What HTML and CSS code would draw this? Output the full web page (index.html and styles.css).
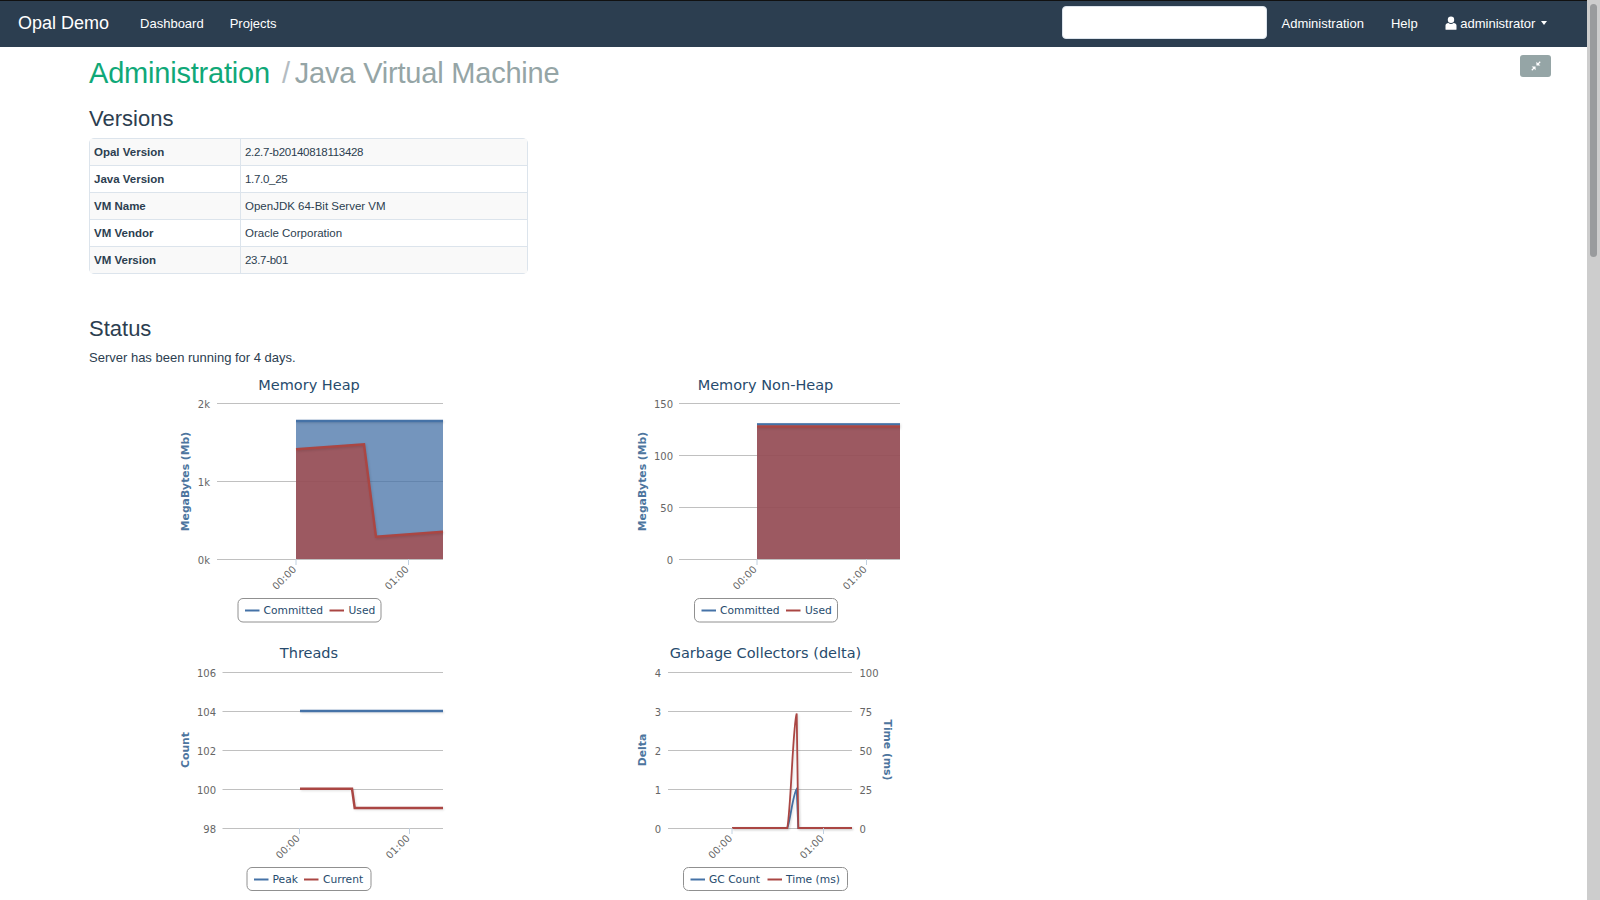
FILE: index.html
```html
<!DOCTYPE html>
<html>
<head>
<meta charset="utf-8" />
<title>Opal Demo</title>
<link rel="stylesheet" href="styles.css">
</head>
<body>

<div class="shell">
  <div class="page">

    <nav class="navbar">
      <a class="brand">Opal Demo</a>
      <a class="nav-link">Dashboard</a>
      <a class="nav-link">Projects</a>
      <div class="nav-right">
        <input class="search" type="text">
        <a class="nav-link">Administration</a>
        <a class="nav-link help">Help</a>
        <a class="nav-link user">
          <svg class="user-icon" width="12" height="14" viewBox="0 0 12 14"><circle cx="6" cy="3.8" r="3.2" fill="#fff"/><path d="M0.5 13.2V9.6C0.5 8 1.8 7.2 3.4 7C4.2 7.7 5 8 6 8C7 8 7.8 7.7 8.6 7C10.2 7.2 11.5 8 11.5 9.6V13.2C11.5 13.6 11.2 13.8 10.8 13.8H1.2C0.8 13.8 0.5 13.6 0.5 13.2Z" fill="#fff"/></svg>
          administrator <span class="caret"></span>
        </a>
      </div>
    </nav>

    <div class="content">
      <div class="title-row">
        <h1><span class="crumb">Administration</span><span class="sep">/</span><span class="sub">Java Virtual Machine</span></h1>
        <button class="btn-full">
          <svg width="10" height="10" viewBox="0 0 12 12"><path d="M6.5 0.8L6.5 5.5L11.2 5.5L9.4 3.7L11.6 1.5L10.5 0.4L8.3 2.6Z M5.5 6.5L0.8 6.5L2.6 8.3L0.4 10.5L1.5 11.6L3.7 9.4L5.5 11.2Z" fill="#fff"/></svg>
        </button>
      </div>

      <h2 class="h-versions">Versions</h2>
      <table class="info">
        <tr><th>Opal Version</th><td class="num">2.2.7-b20140818113428</td></tr>
        <tr><th>Java Version</th><td class="num">1.7.0_25</td></tr>
        <tr><th>VM Name</th><td>OpenJDK 64-Bit Server VM</td></tr>
        <tr><th>VM Vendor</th><td>Oracle Corporation</td></tr>
        <tr><th>VM Version</th><td class="num">23.7-b01</td></tr>
      </table>

      <h2 class="h-status">Status</h2>
      <p class="uptime">Server has been running for 4 days.</p>

      <div class="charts">

        <!-- memory heap -->
        <svg class="chart" width="438" height="268" viewBox="0 0 438 268">
          <text class="c-title" x="220" y="20">Memory Heap</text>
          <path class="grid" d="M128 33.5H354M128 111.5H354M128 189.5H354"/>
          <path class="area-blue" d="M207 50H354V189H207Z"/>
          <path class="area-red" d="M207 79.3L275 74.3L287 166.7L354 161.7V189H207Z"/>
          <path class="line-blue" d="M207 51H354"/>
          <path class="line-red" d="M207 79.3L275 74.3L287 166.7L354 161.7"/>
          <path class="ticks" d="M207 189V195M319.5 189V195"/>
          <text class="y-lab" x="121" y="37.5">2k</text>
          <text class="y-lab" x="121" y="115.5">1k</text>
          <text class="y-lab" x="121" y="193.5">0k</text>
          <text class="y-title" transform="translate(100,111.5) rotate(-90)">MegaBytes (Mb)</text>
          <text class="x-lab" transform="translate(208,200) rotate(-45)">00:00</text>
          <text class="x-lab" transform="translate(320.5,200) rotate(-45)">01:00</text>
          <rect class="legend" x="149" y="228.5" width="143" height="23.5" rx="5"/>
          <path class="leg-blue" d="M156 240.5H170.5"/>
          <text class="leg-text" x="174.5" y="243.5">Committed</text>
          <path class="leg-red" d="M240.5 240.5H255"/>
          <text class="leg-text" x="259.5" y="243.5">Used</text>
        </svg>

        <!-- memory non-heap -->
        <svg class="chart" width="438" height="268" viewBox="0 0 438 268">
          <text class="c-title" x="219.5" y="20">Memory Non-Heap</text>
          <path class="grid" d="M133 33.5H354M133 85.5H354M133 137.5H354M133 189.5H354"/>
          <path class="area-blue" d="M211 53.5H354V189H211Z"/>
          <path class="area-red" d="M211 56H354V189H211Z"/>
          <path class="line-blue thin" d="M211 54.2H354"/>
          <path class="line-red" d="M211 56.5H354"/>
          <path class="ticks" d="M211 189V195M320.5 189V195"/>
          <text class="y-lab" x="127" y="37.5">150</text>
          <text class="y-lab" x="127" y="89.5">100</text>
          <text class="y-lab" x="127" y="141.5">50</text>
          <text class="y-lab" x="127" y="193.5">0</text>
          <text class="y-title" transform="translate(100,111.5) rotate(-90)">MegaBytes (Mb)</text>
          <text class="x-lab" transform="translate(211.5,200) rotate(-45)">00:00</text>
          <text class="x-lab" transform="translate(321.5,200) rotate(-45)">01:00</text>
          <rect class="legend" x="148.5" y="228.5" width="143" height="23.5" rx="5"/>
          <path class="leg-blue" d="M155.5 240.5H170"/>
          <text class="leg-text" x="174" y="243.5">Committed</text>
          <path class="leg-red" d="M240 240.5H254.5"/>
          <text class="leg-text" x="259" y="243.5">Used</text>
        </svg>

        <!-- threads -->
        <svg class="chart" width="438" height="268" viewBox="0 0 438 268">
          <text class="c-title" x="220" y="20">Threads</text>
          <path class="grid" d="M133.5 34.5H354M133.5 73.5H354M133.5 112.5H354M133.5 151.5H354M133.5 190.5H354"/>
          <path class="line-blue" d="M211 73H354"/>
          <path class="line-red" d="M211 150.7H263L265.7 170H354"/>
          <path class="ticks" d="M210.5 190V196M320.5 190V196"/>
          <text class="y-lab" x="127" y="38.5">106</text>
          <text class="y-lab" x="127" y="77.5">104</text>
          <text class="y-lab" x="127" y="116.5">102</text>
          <text class="y-lab" x="127" y="155.5">100</text>
          <text class="y-lab" x="127" y="194.5">98</text>
          <text class="y-title" transform="translate(100,112) rotate(-90)">Count</text>
          <text class="x-lab" transform="translate(211.5,201) rotate(-45)">00:00</text>
          <text class="x-lab" transform="translate(321.5,201) rotate(-45)">01:00</text>
          <rect class="legend" x="158" y="229.5" width="124" height="23" rx="5"/>
          <path class="leg-blue" d="M165 241.5H179.5"/>
          <text class="leg-text" x="183.5" y="244.5">Peak</text>
          <path class="leg-red" d="M215 241.5H229.5"/>
          <text class="leg-text" x="234" y="244.5">Current</text>
        </svg>

        <!-- garbage collectors -->
        <svg class="chart" width="438" height="268" viewBox="0 0 438 268">
          <text class="c-title" x="219.5" y="20">Garbage Collectors (delta)</text>
          <path class="grid" d="M122 34.5H306M122 73.5H306M122 112.5H306M122 151.5H306M122 190.5H306"/>
          <path class="line-blue thin" d="M186 190H241.3C244 184 247 156 250.7 151L252.3 190H306"/>
          <path class="line-red thin" d="M186 190H241.3C245 170 247 85 250.7 75.5L252.3 190H306"/>
          <path class="ticks" d="M186 190V196M277.5 190V196"/>
          <text class="y-lab" x="115" y="38.5">4</text>
          <text class="y-lab" x="115" y="77.5">3</text>
          <text class="y-lab" x="115" y="116.5">2</text>
          <text class="y-lab" x="115" y="155.5">1</text>
          <text class="y-lab" x="115" y="194.5">0</text>
          <text class="y-lab-r" x="313.5" y="38.5">100</text>
          <text class="y-lab-r" x="313.5" y="77.5">75</text>
          <text class="y-lab-r" x="313.5" y="116.5">50</text>
          <text class="y-lab-r" x="313.5" y="155.5">25</text>
          <text class="y-lab-r" x="313.5" y="194.5">0</text>
          <text class="y-title" transform="translate(100,112) rotate(-90)">Delta</text>
          <text class="y-title" transform="translate(338,112) rotate(90)">Time (ms)</text>
          <text class="x-lab" transform="translate(187,201) rotate(-45)">00:00</text>
          <text class="x-lab" transform="translate(278.5,201) rotate(-45)">01:00</text>
          <rect class="legend" x="137.5" y="229.5" width="164" height="23" rx="5"/>
          <path class="leg-blue" d="M144.5 241.5H159"/>
          <text class="leg-text" x="163" y="244.5">GC Count</text>
          <path class="leg-red" d="M221.5 241.5H236"/>
          <text class="leg-text" x="240" y="244.5">Time (ms)</text>
        </svg>

      </div>
    </div>
  </div>

  <div class="scrollbar"><div class="thumb"></div></div>
</div>

</body>
</html>
```

FILE: styles.css
```css
html, body {
  margin: 0;
  padding: 0;
  height: 100%;
  overflow: hidden;
}
body {
  font-family: "Liberation Sans", Arial, sans-serif;
  font-size: 13px;
  color: #2c3e50;
  background: #fff;
}
.shell {
  display: flex;
  height: 100vh;
}
.page {
  flex: 1;
  overflow: hidden;
  border-top: 1px solid #111;
}
.scrollbar {
  width: 13px;
  background: #cdcdcd;
  padding: 4px 3px 0;
  box-sizing: border-box;
}
.thumb {
  height: 253px;
  background: #999b9d;
  border-radius: 4px;
}

.navbar {
  display: flex;
  align-items: center;
  height: 46px;
  padding-bottom: 2px;
  box-sizing: border-box;
  background: #2c3e50;
  color: #fff;
}
.brand {
  font-size: 18px;
  margin-left: 18px;
  margin-right: 18px;
}
.nav-link {
  font-size: 13px;
  padding: 0 13px;
}
.nav-right {
  margin-left: auto;
  display: flex;
  align-items: center;
  padding-right: 27px;
}
.search {
  width: 205px;
  height: 33px;
  margin: -1px 2px 0 0;
  padding: 0;
  border: 1px solid #dce4ec;
  border-radius: 4px;
  background: #fff;
  box-sizing: border-box;
}
.help {
  margin-left: 1px;
}
.user {
  margin-left: 1px;
}
.user-icon {
  vertical-align: -2px;
}
.caret {
  display: inline-block;
  margin-left: 2px;
  vertical-align: 3px;
  border-top: 4px solid #fff;
  border-left: 3.5px solid transparent;
  border-right: 3.5px solid transparent;
}

.content {
  padding: 0 36px 0 89px;
}
.title-row {
  display: flex;
  justify-content: space-between;
  align-items: flex-start;
}
h1 {
  margin: 8px 0 0;
  font-size: 29px;
  font-weight: normal;
  line-height: 36px;
  letter-spacing: -0.2px;
}
.crumb {
  color: #10a878;
}
.sep {
  color: #b4bcc2;
  margin-left: 12px;
  margin-right: 5px;
}
.sub {
  color: #95a5a6;
}
.btn-full {
  margin-top: 8px;
  width: 31px;
  height: 22px;
  padding: 0;
  border: 0;
  border-radius: 3px;
  background: #95a5a6;
  display: flex;
  align-items: center;
  justify-content: center;
}
h2 {
  font-size: 22px;
  font-weight: normal;
  line-height: 26px;
  margin: 0;
}
.h-versions {
  margin-top: 15px;
}
.info {
  margin-top: 6px;
  width: 439px;
  border-collapse: separate;
  border-spacing: 0;
  border: 1px solid #dce4ec;
  border-radius: 5px;
  font-size: 11.5px;
}
.info th, .info td {
  height: 26px;
  padding: 0 4px;
  text-align: left;
  border-top: 1px solid #dce4ec;
}
.info tr:first-child th, .info tr:first-child td {
  border-top: 0;
}
.info th {
  width: 142px;
  border-right: 1px solid #dce4ec;
}
.info .num {
  letter-spacing: -0.3px;
}
.info tr:nth-child(odd) th, .info tr:nth-child(odd) td {
  background: #f9f9f9;
}
.h-status {
  margin-top: 42px;
}
.uptime {
  margin: 8px 0 0;
  font-size: 13px;
}

.charts {
  display: grid;
  grid-template-columns: 438px 438px;
  column-gap: 19px;
  margin-top: 5px;
}
.chart {
  display: block;
  font-family: "DejaVu Sans", sans-serif;
}
.c-title {
  font-size: 14.5px;
  fill: #274b6d;
  text-anchor: middle;
}
.grid {
  fill: none;
  stroke: #c0c0c0;
  stroke-width: 1;
}
.ticks {
  fill: none;
  stroke: #c0d0e0;
  stroke-width: 1;
}
.area-blue {
  fill: #4572a7;
  fill-opacity: 0.75;
}
.area-red {
  fill: #aa4643;
  fill-opacity: 0.75;
}
.line-blue, .line-red {
  fill: none;
  stroke-width: 2.5;
  filter: drop-shadow(1px 1px 1px rgba(0, 0, 0, 0.12));
}
.line-blue, .leg-blue {
  stroke: #4572a7;
}
.line-red, .leg-red {
  stroke: #aa4643;
}
.line-blue.thin, .line-red.thin {
  stroke-width: 1.8;
}
.leg-blue, .leg-red {
  fill: none;
  stroke-width: 2;
}
.y-lab, .y-lab-r, .x-lab {
  font-size: 10px;
  fill: #666;
}
.y-lab {
  text-anchor: end;
}
.x-lab {
  text-anchor: end;
}
.y-title {
  font-size: 10.8px;
  font-weight: bold;
  fill: #4d759e;
  text-anchor: middle;
}
.legend {
  fill: #fff;
  stroke: #909090;
  stroke-width: 1;
}
.leg-text {
  font-size: 10.7px;
  fill: #274b6d;
}
```
